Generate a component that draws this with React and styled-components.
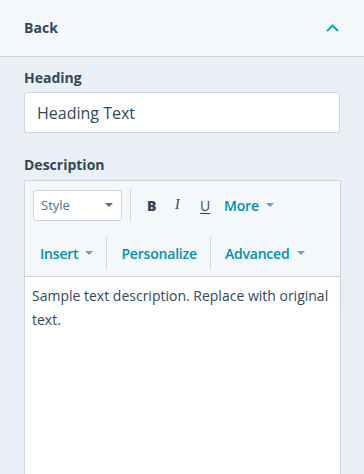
import React from "react";
import styled, { createGlobalStyle } from "styled-components";

const Global = createGlobalStyle`
  html, body { margin: 0; padding: 0; }
  body {
    background: #eaf0f6;
    font-family: "Open Sans", "Noto Sans", sans-serif;
    color: #33475b;
    overflow: hidden;
  }
  * { box-sizing: border-box; }
`;

const Panel = styled.div`
  width: 364px;
  min-height: 474px;
  background: #eaf0f6;
  display: flex;
  flex-direction: column;
`;

const Header = styled.div`
  height: 57px;
  background: #f5f8fa;
  border-bottom: 1px solid #cbd6e2;
  display: flex;
  align-items: center;
  justify-content: space-between;
  padding: 0 25px 0 24px;
`;

const HeaderTitle = styled.span`
  font-size: 14px;
  font-weight: 700;
  color: #33475b;
  letter-spacing: 0.1px;
  margin-top: -1px;
`;

const Body = styled.div`
  padding: 11px 24px 0 24px;
  display: flex;
  flex-direction: column;
`;

const Label = styled.label`
  font-size: 14px;
  font-weight: 700;
  color: #33475b;
  line-height: 20px;
  margin-bottom: ${(p) => p.$mb ?? 4}px;
`;

const Input = styled.div`
  height: 41px;
  width: 316px;
  background: #fff;
  border: 1px solid #cbd6e2;
  border-radius: 3px;
  display: flex;
  align-items: center;
  padding: 0 12px;
  font-size: 16px;
  color: #33475b;
  margin-bottom: 22px;
`;

const Editor = styled.div`
  width: 317px;
  border: 1px solid #cbd6e2;
  border-bottom: none;
  background: #fff;
  display: flex;
  flex-direction: column;
  min-height: 300px;
`;

const Toolbar = styled.div`
  background: #f5f8fa;
  border-bottom: 1px solid #cbd6e2;
  padding: 8px 8px 7px 8px;
  display: flex;
  flex-direction: column;
  gap: 16px;
`;

const ToolRow = styled.div`
  display: flex;
  align-items: center;
  height: 32px;
`;

const Select = styled.div`
  width: 89px;
  height: 31px;
  background: #fff;
  border: 1px solid #cbd6e2;
  border-radius: 3px;
  display: flex;
  align-items: center;
  justify-content: space-between;
  padding: 0 8px 0 7px;
  font-size: 13px;
  color: #516f90;
`;

const Divider = styled.div`
  width: 1px;
  align-self: stretch;
  background: #cbd6e2;
  margin: 0 ${(p) => p.$right ?? 14}px 0 ${(p) => p.$left ?? 13}px;
`;

const FormatBtn = styled.span`
  width: ${(p) => p.$w || 25}px;
  font-size: 14px;
  font-weight: ${(p) => (p.$bold ? 800 : 400)};
  font-style: ${(p) => (p.$italic ? "italic" : "normal")};
  text-decoration: ${(p) => (p.$under ? "underline" : "none")};
  text-underline-offset: 2px;
  font-family: ${(p) => (p.$italic ? '"Liberation Serif", serif' : "inherit")};
  color: #33475b;
`;

const MenuBtn = styled.span`
  display: inline-flex;
  align-items: center;
  gap: 7px;
  font-size: 14px;
  font-weight: 600;
  letter-spacing: -0.2px;
  color: #0091ae;
  padding-left: ${(p) => p.$pl || 0}px;
`;

const Caret = ({ color = "#7c98b6" }) => (
  <svg width="8" height="4" viewBox="0 0 8 4">
    <path d="M0 0 L8 0 L4 4 Z" fill={color} />
  </svg>
);

const Content = styled.div`
  padding: 7px 7px;
  font-size: 14px;
  line-height: 24px;
  color: #33475b;
`;

const Chevron = () => (
  <svg width="13" height="8" viewBox="0 0 13 8">
    <path d="M1 7 L6.5 1.5 L12 7" fill="none" stroke="#00a4bd" strokeWidth="1.8" />
  </svg>
);

export default function App() {
  return (
    <>
      <Global />
      <Panel>
        <Header>
          <HeaderTitle>Back</HeaderTitle>
          <Chevron />
        </Header>
        <Body>
          <Label>Heading</Label>
          <Input>Heading Text</Input>
          <Label $mb={5}>Description</Label>
          <Editor>
            <Toolbar>
              <ToolRow>
                <Select>
                  <span>Style</span>
                  <Caret color="#516f90" />
                </Select>
                <Divider $left={8} $right={16} />
                <FormatBtn $bold $w={28}>B</FormatBtn>
                <FormatBtn $italic $w={25}>I</FormatBtn>
                <FormatBtn $under $w={24}>U</FormatBtn>
                <MenuBtn>More <Caret /></MenuBtn>
              </ToolRow>
              <ToolRow>
                <MenuBtn $pl={7}>Insert <Caret /></MenuBtn>
                <Divider />
                <MenuBtn>Personalize</MenuBtn>
                <Divider />
                <MenuBtn>Advanced <Caret /></MenuBtn>
              </ToolRow>
            </Toolbar>
            <Content>Sample text description. Replace with original text.</Content>
          </Editor>
        </Body>
      </Panel>
    </>
  );
}
